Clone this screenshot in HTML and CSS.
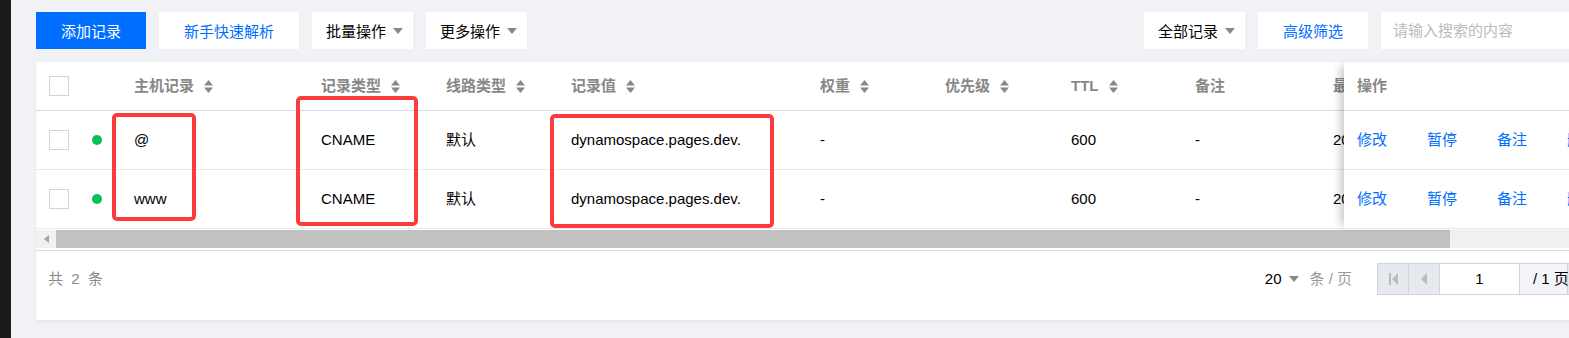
FILE: index.html
```html
<html>

<head>
    <meta charset="utf-8">
    <title>记录管理</title>
    <link rel="stylesheet" href="styles.css">
</head>

<body>
    <div class="page">
        <div class="sidebar"></div>
        <div class="main">
            <div class="toolbar">
                <div class="toolbar-group">
                    <button class="btn btn-primary">添加记录</button>
                    <button class="btn btn-link">新手快速解析</button>
                    <button class="btn btn-drop">批量操作 <svg class="caret" width="10" height="6" viewBox="0 0 10 6"><path d="M0 0h10L5 6z"/></svg></button>
                    <button class="btn btn-drop">更多操作 <svg class="caret" width="10" height="6" viewBox="0 0 10 6"><path d="M0 0h10L5 6z"/></svg></button>
                </div>
                <div class="toolbar-group">
                    <button class="btn btn-drop">全部记录 <svg class="caret" width="10" height="6" viewBox="0 0 10 6"><path d="M0 0h10L5 6z"/></svg></button>
                    <button class="btn btn-link">高级筛选</button>
                    <input class="search" type="text" placeholder="请输入搜索的内容">
                </div>
            </div>

            <div class="card">
                <div class="grid">
                    <div class="scroll-part">
                        <div class="scroll-inner">
                            <div class="row head">
                                <div class="cell col-check"><span class="checkbox"></span></div>
                                <div class="cell col-dot"></div>
                                <div class="cell col-host">主机记录 <svg class="sort" width="9" height="13" viewBox="0 0 9 13"><path d="M4.5 0L9 5.5H0zM4.5 13L0 7.5h9z"/></svg></div>
                                <div class="cell col-type">记录类型 <svg class="sort" width="9" height="13" viewBox="0 0 9 13"><path d="M4.5 0L9 5.5H0zM4.5 13L0 7.5h9z"/></svg></div>
                                <div class="cell col-line">线路类型 <svg class="sort" width="9" height="13" viewBox="0 0 9 13"><path d="M4.5 0L9 5.5H0zM4.5 13L0 7.5h9z"/></svg></div>
                                <div class="cell col-value">记录值 <svg class="sort" width="9" height="13" viewBox="0 0 9 13"><path d="M4.5 0L9 5.5H0zM4.5 13L0 7.5h9z"/></svg></div>
                                <div class="cell col-weight">权重 <svg class="sort" width="9" height="13" viewBox="0 0 9 13"><path d="M4.5 0L9 5.5H0zM4.5 13L0 7.5h9z"/></svg></div>
                                <div class="cell col-prio">优先级 <svg class="sort" width="9" height="13" viewBox="0 0 9 13"><path d="M4.5 0L9 5.5H0zM4.5 13L0 7.5h9z"/></svg></div>
                                <div class="cell col-ttl">TTL <svg class="sort" width="9" height="13" viewBox="0 0 9 13"><path d="M4.5 0L9 5.5H0zM4.5 13L0 7.5h9z"/></svg></div>
                                <div class="cell col-note">备注</div>
                                <div class="cell col-time">最后操作时间</div>
                            </div>
                            <div class="row">
                                <div class="cell col-check"><span class="checkbox"></span></div>
                                <div class="cell col-dot"><span class="dot"></span></div>
                                <div class="cell col-host">@</div>
                                <div class="cell col-type">CNAME</div>
                                <div class="cell col-line">默认</div>
                                <div class="cell col-value">dynamospace.pages.dev.</div>
                                <div class="cell col-weight">-</div>
                                <div class="cell col-prio"></div>
                                <div class="cell col-ttl">600</div>
                                <div class="cell col-note">-</div>
                                <div class="cell col-time">2024-05-18 10:21:35</div>
                            </div>
                            <div class="row">
                                <div class="cell col-check"><span class="checkbox"></span></div>
                                <div class="cell col-dot"><span class="dot"></span></div>
                                <div class="cell col-host">www</div>
                                <div class="cell col-type">CNAME</div>
                                <div class="cell col-line">默认</div>
                                <div class="cell col-value">dynamospace.pages.dev.</div>
                                <div class="cell col-weight">-</div>
                                <div class="cell col-prio"></div>
                                <div class="cell col-ttl">600</div>
                                <div class="cell col-note">-</div>
                                <div class="cell col-time">2024-05-18 10:20:52</div>
                            </div>
                        </div>
                    </div>
                    <div class="fixed-part">
                        <div class="row head">
                            <div class="cell">操作</div>
                        </div>
                        <div class="row">
                            <div class="cell"><a class="op">修改</a><a class="op">暂停</a><a class="op">备注</a><a class="op">删除</a></div>
                        </div>
                        <div class="row">
                            <div class="cell"><a class="op">修改</a><a class="op">暂停</a><a class="op">备注</a><a class="op">删除</a></div>
                        </div>
                    </div>
                </div>

                <div class="hscroll">
                    <div class="hscroll-arrow"><svg width="5" height="8" viewBox="0 0 5 8"><path d="M5 0V8L0 4z"/></svg></div>
                    <div class="hscroll-thumb"></div>
                </div>

                <div class="footer">
                    <div class="total">共 2 条</div>
                    <div class="pager-group">
                        <span class="page-size">20</span>
                        <svg class="caret size-caret" width="10" height="6" viewBox="0 0 10 6"><path d="M0 0h10L5 6z"/></svg>
                        <span class="page-unit">条 / 页</span>
                        <div class="pager">
                            <div class="pg-btn"><svg width="9" height="12" viewBox="0 0 9 12"><path d="M0 0h2v12H0zM9 0v12L3 6z"/></svg></div>
                            <div class="pg-btn"><svg width="6" height="12" viewBox="0 0 6 12"><path d="M6 0v12L0 6z"/></svg></div>
                            <div class="pg-input">1</div>
                            <div class="pg-total">/ 1 页</div>
                            <div class="pg-btn"><svg width="6" height="12" viewBox="0 0 6 12"><path d="M0 0v12l6-6z"/></svg></div>
                            <div class="pg-btn"><svg width="9" height="12" viewBox="0 0 9 12"><path d="M7 0h2v12H7zM0 0v12l6-6z"/></svg></div>
                        </div>
                    </div>
                </div>

                <!-- annotation boxes drawn over the table -->
                <div class="mark mark-host"></div>
                <div class="mark mark-type"></div>
                <div class="mark mark-value"></div>
            </div>
        </div>
    </div>
</body>

</html>
```

FILE: styles.css
```css
body {
    margin: 0;
    background-color: #f1f2f5;
    font-family: "Liberation Sans", "Noto Sans CJK SC", sans-serif;
    font-size: 15px;
    line-height: 20px;
    color: #000;
    overflow: hidden;
}

.page {
    display: flex;
    height: 100vh;
}

.sidebar {
    flex: none;
    width: 11px;
    background-color: #1b1b1b;
}

.main {
    flex: none;
    width: 1607px;
    padding: 12px 0 0 25px;
}

/* toolbar */

.toolbar {
    display: flex;
    justify-content: space-between;
    height: 37px;
    margin-bottom: 13px;
}

.toolbar-group {
    display: flex;
    gap: 13px;
}

.btn {
    display: flex;
    align-items: center;
    gap: 7px;
    height: 37px;
    padding: 0 25px;
    border: none;
    background: #fff;
    color: #000;
    font-family: inherit;
    font-size: 15px;
}

.btn-primary {
    background: #006eff;
    color: #fff;
}

.btn-link {
    color: #006eff;
}

.btn-drop {
    padding: 0 10px 0 14px;
}

.caret path {
    fill: #888;
}

.search {
    width: 262px;
    height: 37px;
    box-sizing: border-box;
    border: none;
    padding: 0 12px;
    font-family: inherit;
    font-size: 15px;
    outline: none;
}

.search::placeholder {
    color: #bbb;
}

/* table card */

.card {
    position: relative;
    background: #fff;
    box-shadow: 0 2px 3px rgba(0, 0, 0, 0.05);
}

.grid {
    display: flex;
}

.scroll-part {
    flex: none;
    width: 1308px;
    overflow: hidden;
}

.scroll-inner {
    width: 1308px;
}

.row {
    display: flex;
    align-items: center;
    height: 58px;
    border-bottom: 1px solid #e7e9ee;
}

.row.head {
    height: 48px;
    border-bottom-color: #d6dbe3;
    color: #888;
    font-weight: bold;
}

.cell {
    flex: none;
    display: flex;
    align-items: center;
    gap: 10px;
    box-sizing: border-box;
    padding-left: 12px;
    white-space: nowrap;
    overflow: hidden;
}

.sort path {
    fill: #888;
}

.col-check { width: 44px; padding-left: 13px; }
.col-dot { width: 42px; }
.col-host { width: 187px; }
.col-type { width: 125px; }
.col-line { width: 125px; }
.col-value { width: 249px; }
.col-weight { width: 125px; }
.col-prio { width: 126px; }
.col-ttl { width: 124px; }
.col-note { width: 138px; }
.col-time { width: 23px; }

.checkbox {
    display: block;
    width: 20px;
    height: 20px;
    box-sizing: border-box;
    border: 1px solid #cfd5de;
    background: #fff;
}

.dot {
    display: block;
    width: 10px;
    height: 10px;
    border-radius: 50%;
    background: #0abf5b;
}

.fixed-part {
    flex: 1;
    position: relative;
    z-index: 1;
    background: #fff;
    box-shadow: -8px 0 8px -4px rgba(0, 0, 0, 0.2);
}

.fixed-part .cell {
    padding-left: 13px;
    gap: 0;
}

.op {
    color: #006eff;
    margin-right: 40px;
}

/* fake horizontal scrollbar */

.hscroll {
    display: flex;
    height: 18px;
    margin: 1px 0 2px;
    background: #f1f1f1;
}

.hscroll-arrow {
    display: flex;
    align-items: center;
    justify-content: center;
    width: 20px;
}

.hscroll-arrow path {
    fill: #a3a3a3;
}

.hscroll-thumb {
    width: 1394px;
    background: #c1c1c1;
}

/* footer */

.footer {
    display: flex;
    justify-content: space-between;
    align-items: center;
    border-top: 1px solid #d6dbe3;
    padding: 12px 12px 25px 12px;
}

.total {
    color: #888;
    word-spacing: 4px;
}

.pager-group {
    display: flex;
    align-items: center;
}

.size-caret {
    margin: 0 10px 0 8px;
}

.page-unit {
    color: #999;
    margin-right: 25px;
}

.pager {
    display: flex;
    height: 32px;
    box-sizing: border-box;
    border: 1px solid #cfd5de;
}

.pg-btn {
    display: flex;
    align-items: center;
    justify-content: center;
    width: 31px;
    box-sizing: border-box;
    border-right: 1px solid #cfd5de;
    background: #e6e9ee;
}

.pg-btn path {
    fill: #bbb;
}

.pg-input {
    display: flex;
    align-items: center;
    justify-content: center;
    width: 80px;
    box-sizing: border-box;
    border-right: 1px solid #cfd5de;
    background: #fff;
}

.pg-total {
    display: flex;
    align-items: center;
    width: 48px;
    box-sizing: border-box;
    padding-left: 13px;
    border-right: 1px solid #cfd5de;
    background: #f2f4f7;
    white-space: nowrap;
}

/* red annotation boxes */

.mark {
    position: absolute;
    border: 4px solid #fb3c3c;
    border-radius: 5px;
    box-sizing: border-box;
}

.mark-host {
    left: 76px;
    top: 51px;
    width: 84px;
    height: 108px;
}

.mark-type {
    left: 260px;
    top: 34px;
    width: 122px;
    height: 130px;
}

.mark-value {
    left: 514px;
    top: 52px;
    width: 224px;
    height: 114px;
}
```
